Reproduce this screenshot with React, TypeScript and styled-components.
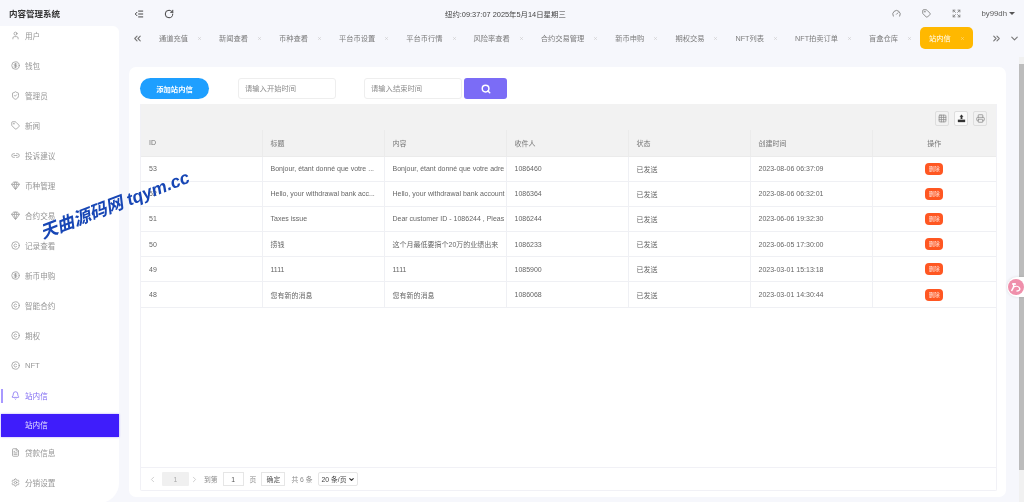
import React from 'react'
import styled, { createGlobalStyle } from 'styled-components'
import {
  Bell,
  ChevronDown,
  ChevronLeft,
  ChevronRight,
  ChevronsLeft,
  ChevronsRight,
  CircleDollarSign,
  Copyright,
  Expand,
  FileText,
  Gauge,
  Gem,
  Grid3x3,
  IndentDecrease,
  Link2,
  Printer,
  RotateCw,
  Search,
  Settings,
  ShieldCheck,
  Tag,
  User,
  X,
} from 'lucide-react'

const FONT = `"Liberation Sans", "Noto Sans CJK SC", sans-serif`

const GlobalStyle = createGlobalStyle`
  html, body {
    margin: 0;
    padding: 0;
    height: 100%;
    overflow: hidden;
    background: #f6f7fc;
    font-family: ${FONT};
  }
  * {
    box-sizing: border-box;
  }
`

const Page = styled.div`
  position: relative;
  width: 1024px;
  height: 502px;
  display: grid;
  grid-template-columns: 119px 1fr;
  overflow: hidden;
  background: #f6f7fc;
  filter: blur(0.3px);
`

const Side = styled.aside`
  display: flex;
  flex-direction: column;
  height: 497px;
`
const Brand = styled.div`
  height: 26px;
  flex: none;
  padding-left: 9px;
  display: flex;
  align-items: center;
  font-size: 8.5px;
  font-weight: 700;
  color: #333;
`
const Nav = styled.nav`
  flex: 1;
  display: flex;
  flex-direction: column;
  background: #fff;
  border-radius: 0 6px 20px 0;
`
const NavItem = styled.div<{ $open?: boolean }>`
  position: relative;
  height: 20px;
  flex: none;
  margin-bottom: 10px;
  padding: 0 0 1px 11px;
  display: flex;
  align-items: center;
  gap: 5px;
  font-size: 7.6px;
  color: ${p => (p.$open ? '#7f6af2' : '#969696')};
  svg {
    width: 9px;
    height: 9px;
    flex: none;
  }
  ${p =>
    p.$open &&
    `
    margin-bottom: 8px;
    &::before {
      content: '';
      position: absolute;
      left: 1px;
      top: 3px;
      width: 2px;
      height: 14px;
      background: #a899ff;
    }
  `}
`
const SubItem = styled.div`
  height: 23px;
  flex: none;
  margin: 0 0 6px 1px;
  padding: 0 0 2px 24px;
  display: flex;
  align-items: center;
  font-size: 7.6px;
  color: #e8e4ff;
  background: #3f1dfb;
  box-shadow: 0 0 2px rgba(63, 29, 251, 0.4);
`

const Main = styled.main`
  display: flex;
  flex-direction: column;
  min-width: 0;
`
const Header = styled.header`
  height: 27px;
  flex: none;
  display: grid;
  grid-template-columns: 326px auto 1fr;
  align-items: center;
  color: #444;
`
const HeaderLeft = styled.div`
  display: flex;
  align-items: center;
  gap: 20px;
  padding-left: 15px;
  svg {
    width: 10px;
    height: 10px;
    stroke-width: 2.4;
  }
`
const Clock = styled.div`
  font-size: 7.4px;
  color: #444;
`
const HeaderRight = styled.div`
  display: flex;
  align-items: center;
  justify-content: flex-end;
  padding-right: 9px;
  gap: 21px;
  color: #808080;
  svg {
    width: 9px;
    height: 9px;
    stroke-width: 2.4;
  }
`
const UserName = styled.div`
  display: flex;
  align-items: center;
  gap: 2px;
  margin-left: -1px;
  font-size: 7.8px;
  color: #5c5c5c;
  &::after {
    content: '';
    border: 3.5px solid transparent;
    border-top: 3.5px solid #555;
    border-bottom: 0;
  }
`

const TabBar = styled.div`
  height: 22px;
  flex: none;
  display: flex;
  align-items: center;
  color: #777;
  padding-left: 13px;
`
const TabArrow = styled.div<{ $gap?: number }>`
  display: flex;
  align-items: center;
  margin-left: ${p => p.$gap || 0}px;
  svg {
    width: 11px;
    height: 11px;
    stroke-width: 2.4;
  }
`
const Tabs = styled.div`
  display: flex;
  align-items: center;
  margin-left: 7px;
`
const Tab = styled.div<{ $active?: boolean }>`
  height: 22px;
  padding: 0 9px;
  display: flex;
  align-items: center;
  gap: 9px;
  font-size: 7.26px;
  white-space: nowrap;
  border-radius: 5px;
  color: ${p => (p.$active ? '#fff' : '#7c7c7c')};
  background: ${p => (p.$active ? '#ffb800' : 'transparent')};
  svg {
    width: 5px;
    height: 5px;
    margin-right: -1px;
    flex: none;
    color: ${p => (p.$active ? '#ffe7a8' : '#bcbcbc')};
  }
`

const Card = styled.section`
  width: 877px;
  height: 430px;
  margin: 18px 0 0 10px;
  padding: 11px 9px 6px 11px;
  display: flex;
  flex-direction: column;
  background: #fff;
  border-radius: 7px;
`
const Filters = styled.div`
  height: 21px;
  flex: none;
  display: flex;
  align-items: stretch;
`
const AddButton = styled.button`
  width: 69px;
  margin-right: 29px;
  padding: 0;
  border: 0;
  border-radius: 11px;
  font-family: ${FONT};
  font-size: 7.3px;
  font-weight: 700;
  color: #fff;
  background: #1e9fff;
`
const DateInput = styled.input`
  width: 98px;
  padding: 0 6px;
  border: 1px solid #eeeeee;
  border-radius: 3px;
  outline: 0;
  font-family: ${FONT};
  font-size: 7.3px;
  color: #666;
  background: #fff;
  &::placeholder {
    color: #8c8c8c;
  }
  & + & {
    margin-left: 28px;
  }
`
const SearchButton = styled.button`
  width: 43px;
  margin-left: 2px;
  padding: 0;
  border: 0;
  border-radius: 3px;
  display: flex;
  align-items: center;
  justify-content: center;
  color: #fff;
  background: #7b6cf6;
  svg {
    width: 10px;
    height: 10px;
    stroke-width: 3.5;
  }
`

const TableFrame = styled.div`
  flex: 1;
  margin-top: 5px;
  display: flex;
  flex-direction: column;
  border: 1px solid #f1f1f6;
  border-top: 0;
  border-radius: 0 0 2px 2px;
`
const ToolBar = styled.div`
  height: 26px;
  flex: none;
  padding: 2px 9px 0 0;
  display: flex;
  align-items: center;
  justify-content: flex-end;
  gap: 5px;
  background: #f2f2f2;
`
const ToolButton = styled.div<{ $dark?: boolean }>`
  width: 14px;
  height: 15px;
  display: flex;
  align-items: center;
  justify-content: center;
  border: 1px solid #dedede;
  border-radius: 2px;
  color: ${p => (p.$dark ? '#333' : '#8a8a8a')};
  background: ${p => (p.$dark ? '#fafafa' : 'transparent')};
  svg {
    width: 9px;
    height: 9px;
  }
`
const ListBody = styled.div`
  flex: 1;
`
const Table = styled.table`
  width: 100%;
  table-layout: fixed;
  border-collapse: collapse;
  font-size: 7px;
  color: #666;
`
const Th = styled.th<{ $center?: boolean }>`
  height: 26px;
  padding: 0 8px;
  font-weight: 400;
  text-align: ${p => (p.$center ? 'center' : 'left')};
  background: #f2f2f2;
  border: 1px solid #ebebeb;
  border-top: 0;
  color: #777;
  &:first-child {
    border-left: 0;
  }
  &:last-child {
    border-right: 0;
  }
`
const Td = styled.td<{ $center?: boolean }>`
  height: 25.2px;
  padding: 0 0 0 8px;
  white-space: nowrap;
  overflow: hidden;
  text-align: ${p => (p.$center ? 'center' : 'left')};
  border: 1px solid #eff0f4;
  &:first-child {
    border-left: 0;
  }
  &:last-child {
    padding: 0;
    border-right: 0;
  }
`
const DeleteButton = styled.span`
  display: inline-block;
  width: 18px;
  height: 12px;
  border-radius: 4px;
  font-size: 5.5px;
  line-height: 12px;
  text-align: center;
  color: #ffe6de;
  background: #ff5722;
`

const Pager = styled.div`
  height: 23px;
  flex: none;
  display: flex;
  align-items: center;
  padding-left: 7px;
  font-size: 6.8px;
  color: #8c8c8c;
  border-top: 1px solid #f1f1f6;
`
const PagerIcon = styled.span`
  display: flex;
  color: #c0c0c0;
  svg {
    width: 9px;
    height: 9px;
  }
`
const PagerText = styled.span<{ $gap?: number }>`
  margin-left: ${p => p.$gap || 0}px;
`
const CurrentPage = styled.div`
  width: 27px;
  height: 14px;
  margin: 0 1px 0 5px;
  display: flex;
  align-items: center;
  justify-content: center;
  border-radius: 1px;
  color: #aaa;
  background: #f0f0f0;
`
const PageInput = styled.div`
  width: 21px;
  height: 14px;
  margin: 0 6px 0 5px;
  display: flex;
  align-items: center;
  justify-content: center;
  color: #555;
  border: 1px solid #e6e6e6;
`
const Confirm = styled.div`
  width: 24px;
  height: 14px;
  margin: 0 6px 0 5px;
  display: flex;
  align-items: center;
  justify-content: center;
  color: #555;
  border: 1px solid #e6e6e6;
`
const PageSize = styled.div`
  width: 40px;
  height: 14px;
  margin-left: 5px;
  padding: 0 2px 0 3px;
  display: flex;
  align-items: center;
  justify-content: space-between;
  white-space: nowrap;
  color: #444;
  background: #fff;
  border: 1px solid #e6e6e6;
  border-radius: 2px;
  svg {
    width: 7px;
    height: 7px;
    flex: none;
    stroke-width: 4;
    color: #333;
  }
`

const Watermark = styled.div`
  position: absolute;
  left: 35px;
  top: 191px;
  font-size: 17.5px;
  font-weight: 700;
  font-style: italic;
  white-space: nowrap;
  color: #1746b5;
  transform: rotate(-21deg);
  transform-origin: center;
`
const ScrollTrack = styled.div`
  position: absolute;
  right: 0;
  top: 57px;
  bottom: 0;
  width: 5px;
  padding-top: 7px;
  background: #f1f1f1;
`
const ScrollThumb = styled.div`
  height: 406px;
  background: #bcbcbc;
`
const Floater = styled.div`
  position: absolute;
  right: 0;
  top: 277px;
  width: 17px;
  height: 20px;
  padding-left: 1px;
  display: flex;
  align-items: center;
  border-radius: 10px 0 0 10px;
  background: #fff;
  box-shadow: 0 0 3px rgba(0, 0, 0, 0.12);
  svg {
    width: 16px;
    height: 16px;
  }
`

interface IMenu {
  label: string
  icon: React.ReactNode
}

const menus: IMenu[] = [
  { label: '用户', icon: <User /> },
  { label: '钱包', icon: <CircleDollarSign /> },
  { label: '管理员', icon: <ShieldCheck /> },
  { label: '新闻', icon: <Tag /> },
  { label: '投诉建议', icon: <Link2 /> },
  { label: '币种管理', icon: <Gem /> },
  { label: '合约交易', icon: <Gem /> },
  { label: '记录查看', icon: <Copyright /> },
  { label: '新币申购', icon: <CircleDollarSign /> },
  { label: '智能合约', icon: <Copyright /> },
  { label: '期权', icon: <Copyright /> },
  { label: 'NFT', icon: <Copyright /> },
]

const tabs = [
  '通道充值',
  '新闻查看',
  '币种查看',
  '平台币设置',
  '平台币行情',
  '风险率查看',
  '合约交易管理',
  '新币申购',
  '期权交易',
  'NFT列表',
  'NFT拍卖订单',
  '盲盒仓库',
]

const rows = [
  ['53', 'Bonjour, étant donné que votre ...', 'Bonjour, étant donné que votre adre', '1086460', '2023-08-06 06:37:09'],
  ['52', 'Hello, your withdrawal bank acc...', 'Hello, your withdrawal bank account', '1086364', '2023-08-06 06:32:01'],
  ['51', 'Taxes issue', 'Dear customer ID - 1086244 , Pleas', '1086244', '2023-06-06 19:32:30'],
  ['50', '捞钱', '这个月最低要搞个20万的业绩出来', '1086233', '2023-06-05 17:30:00'],
  ['49', '1111', '1111', '1085900', '2023-03-01 15:13:18'],
  ['48', '您有新的消息', '您有新的消息', '1086068', '2023-03-01 14:30:44'],
]

const App: React.FC = () => (
  <Page>
    <GlobalStyle />
    <Side>
      <Brand>内容管理系统</Brand>
      <Nav>
        {menus.map(item => (
          <NavItem key={item.label}>
            {item.icon}
            {item.label}
          </NavItem>
        ))}
        <NavItem $open>
          <Bell />
          站内信
        </NavItem>
        <SubItem>站内信</SubItem>
        <NavItem>
          <FileText />
          贷款信息
        </NavItem>
        <NavItem>
          <Settings />
          分销设置
        </NavItem>
      </Nav>
    </Side>

    <Main>
      <Header>
        <HeaderLeft>
          <IndentDecrease />
          <RotateCw />
        </HeaderLeft>
        <Clock>纽约:09:37:07 2025年5月14日星期三</Clock>
        <HeaderRight>
          <Gauge />
          <Tag />
          <Expand />
          <UserName>by99dh</UserName>
        </HeaderRight>
      </Header>

      <TabBar>
        <TabArrow>
          <ChevronsLeft />
        </TabArrow>
        <Tabs>
          {tabs.map(name => (
            <Tab key={name}>
              {name}
              <X />
            </Tab>
          ))}
          <Tab $active>
            站内信
            <X />
          </Tab>
        </Tabs>
        <TabArrow $gap={18}>
          <ChevronsRight />
        </TabArrow>
        <TabArrow $gap={7}>
          <ChevronDown />
        </TabArrow>
      </TabBar>

      <Card>
        <Filters>
          <AddButton>添加站内信</AddButton>
          <DateInput placeholder="请输入开始时间" />
          <DateInput placeholder="请输入结束时间" />
          <SearchButton>
            <Search />
          </SearchButton>
        </Filters>

        <TableFrame>
          <ToolBar>
            <ToolButton>
              <Grid3x3 />
            </ToolButton>
            <ToolButton $dark>
              <svg viewBox="0 0 16 16">
                <path d="M8 1l3.5 4H9.6v4H6.4V5H4.5z" fill="currentColor" />
                <path d="M1.5 10h13v4.5h-13z" fill="currentColor" />
              </svg>
            </ToolButton>
            <ToolButton>
              <Printer />
            </ToolButton>
          </ToolBar>
          <ListBody>
            <Table>
              <colgroup>
                <col width="121" />
                <col width="122" />
                <col width="122" />
                <col width="122" />
                <col width="122" />
                <col width="122" />
                <col />
              </colgroup>
              <thead>
                <tr>
                  <Th>ID</Th>
                  <Th>标题</Th>
                  <Th>内容</Th>
                  <Th>收件人</Th>
                  <Th>状态</Th>
                  <Th>创建时间</Th>
                  <Th $center>操作</Th>
                </tr>
              </thead>
              <tbody>
                {rows.map(row => (
                  <tr key={row[0]}>
                    <Td>{row[0]}</Td>
                    <Td>{row[1]}</Td>
                    <Td>{row[2]}</Td>
                    <Td>{row[3]}</Td>
                    <Td>已发送</Td>
                    <Td>{row[4]}</Td>
                    <Td $center>
                      <DeleteButton>删除</DeleteButton>
                    </Td>
                  </tr>
                ))}
              </tbody>
            </Table>
          </ListBody>
          <Pager>
            <PagerIcon>
              <ChevronLeft />
            </PagerIcon>
            <CurrentPage>1</CurrentPage>
            <PagerIcon>
              <ChevronRight />
            </PagerIcon>
            <PagerText $gap={5}>到第</PagerText>
            <PageInput>1</PageInput>
            <PagerText>页</PagerText>
            <Confirm>确定</Confirm>
            <PagerText>共 6 条</PagerText>
            <PageSize>
              20 条/页
              <ChevronDown />
            </PageSize>
          </Pager>
        </TableFrame>
      </Card>
    </Main>

    <Watermark>天曲源码网 tqym.cc</Watermark>
    <ScrollTrack>
      <ScrollThumb />
    </ScrollTrack>
    <Floater>
      <svg viewBox="0 0 16 16">
        <circle cx="8" cy="8" r="8" fill="#ef8fab" />
        <path d="M4 5h4M6 4c0 3-1 6-2.500 8M5.500 8c2-1 5-1 6 1s-1 3-3 3" fill="none" stroke="#fff" strokeWidth="1.4" />
      </svg>
    </Floater>
  </Page>
)

export default App
